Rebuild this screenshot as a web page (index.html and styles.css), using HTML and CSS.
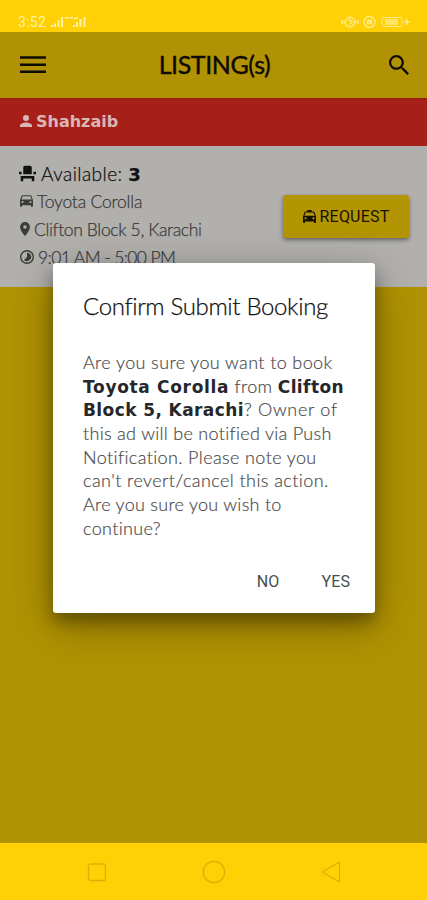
FILE: index.html
```html
<!DOCTYPE html>
<html lang="en">
<head>
<meta charset="utf-8">
<title>Listings</title>
<link rel="stylesheet" href="styles.css">
</head>
<body>
<div class="phone">
  <div class="status">
    <div class="status-left">
      <span class="clock">3:52</span>
      <svg width="38" height="12" viewBox="0 0 38 12" fill="currentColor"><path d="M1 9h2v2H1zM4 7.500h2V11H4zM7.500 4h2v7h-2zM11 1h2v10h-2zM15 1h4v1.500h-4zM20 1h3v1.500h-3zM23 9h2v2h-2zM26 6h2v5h-2zM29.500 3h2v8h-2zM33.500 1h2v10h-2zM24 2l4-1v1.500l-4 1z"/></svg>
    </div>
    <svg width="70" height="14" viewBox="0 0 70 14" fill="none" stroke="currentColor" stroke-width="1.500"><path d="M1 5v4M3 6v2M15 6v2M17 5v4"/><circle cx="9" cy="7" r="4.800"/><path d="M7 6l2-1.500L11 7 8.500 9.500"/><circle cx="28.500" cy="7" r="5.500"/><path d="M26.500 8.500h4v-2h-4zM27 6.500v-1.300h3v1.300"/><rect x="41" y="2.500" width="20" height="9" rx="2" stroke-width="1"/><rect x="44" y="4" width="13" height="6" fill="currentColor" stroke="none" opacity=".75"/><path d="M63 7h2M66 4v6M66 7h3"/></svg>
  </div>
  <header class="bar">
    <svg class="menu" width="26" height="18" viewBox="0 0 26 18" fill="currentColor"><path d="M0 .3h26v2.400H0zM0 7.500h26v2.400H0zM0 14.600h26V17H0z"/></svg>
    <h1>LISTING(s)</h1>
    <svg class="search" width="20" height="20" viewBox="3 3 17.500 17.500" fill="currentColor"><path d="M15.500 14h-.79l-.28-.27A6.470 6.470 0 0 0 16 9.500 6.500 6.500 0 1 0 9.500 16c1.610 0 3.090-.59 4.230-1.570l.27.28v.79l5 4.990L20.490 19zm-6 0C7.010 14 5 11.990 5 9.500S7.010 5 9.500 5 14 7.010 14 9.500 11.990 14 9.500 14z"/></svg>
  </header>
  <div class="owner">
    <svg width="12" height="12" viewBox="4 4 16 16" fill="currentColor"><path d="M12 12a4 4 0 1 0 0-8 4 4 0 0 0 0 8zm0 2c-2.670 0-8 1.340-8 4v2h16v-2c0-2.660-5.330-4-8-4z"/></svg>
    <span class="owner-name">Shahzaib</span>
  </div>
  <section class="card">
    <div class="details">
      <div class="row seats">
        <svg width="17" height="17" viewBox="2 2 20 20" fill="currentColor"><path d="M4 18v3h3v-3h10v3h3v-6H4zm15-8h3v3h-3zM2 10h3v3H2zm15 3H7V5c0-1.100.9-2 2-2h6c1.100 0 2 .9 2 2z"/></svg>
        <span class="t-available">Available: <b>3</b></span>
      </div>
      <div class="row car">
        <svg width="13" height="12" viewBox="3 5 18 16" fill="currentColor"><path d="M18.920 6.010C18.720 5.420 18.160 5 17.500 5h-11c-.66 0-1.210.42-1.420 1.010L3 12v8c0 .55.45 1 1 1h1c.55 0 1-.45 1-1v-1h12v1c0 .55.45 1 1 1h1c.55 0 1-.45 1-1v-8zM6.500 16a1.500 1.500 0 1 1 0-3 1.500 1.500 0 0 1 0 3zm11 0a1.500 1.500 0 1 1 0-3 1.500 1.500 0 0 1 0 3zM5 11l1.500-4.500h11L19 11z"/></svg>
        <span class="t-car">Toyota Corolla</span>
      </div>
      <div class="row place">
        <svg width="10" height="14" viewBox="5 2 14 20" fill="currentColor"><path d="M12 2a7 7 0 0 0-7 7c0 5.250 7 13 7 13s7-7.750 7-13a7 7 0 0 0-7-7zm0 9.500a2.500 2.500 0 1 1 0-5 2.500 2.500 0 0 1 0 5z"/></svg>
        <span class="t-place">Clifton Block 5, Karachi</span>
      </div>
      <div class="row time">
        <svg width="14" height="14" viewBox="2 2 20 20" fill="currentColor"><path d="M16.240 7.760A5.970 5.970 0 0 0 12 6v6l-4.240 4.240a6 6 0 0 0 8.480-8.480zM12 2a10 10 0 1 0 0 20 10 10 0 0 0 0-20zm0 18a8 8 0 1 1 0-16 8 8 0 0 1 0 16z"/></svg>
        <span class="t-time">9:01 AM - 5:00 PM</span>
      </div>
    </div>
    <button class="request">
      <svg width="13" height="13" viewBox="3 3 18 18" fill="currentColor"><path d="M18.920 6.010C18.720 5.420 18.160 5 17.500 5H15V3H9v2H6.500c-.66 0-1.210.42-1.420 1.010L3 12v8c0 .55.45 1 1 1h1c.55 0 1-.45 1-1v-1h12v1c0 .55.45 1 1 1h1c.55 0 1-.45 1-1v-8zM6.500 16a1.500 1.500 0 1 1 0-3 1.500 1.500 0 0 1 0 3zm11 0a1.500 1.500 0 1 1 0-3 1.500 1.500 0 0 1 0 3zM5 11l1.500-4.500h11L19 11z"/></svg>
      <span>REQUEST</span>
    </button>
  </section>
  <main class="rest"></main>
  <nav class="nav">
    <svg width="20" height="20" viewBox="0 0 20 20"><rect x="1.500" y="2" width="17" height="16.500" rx="2"/></svg>
    <svg width="24" height="24" viewBox="0 0 24 24"><circle cx="12" cy="12" r="10.700"/></svg>
    <svg width="20" height="22" viewBox="0 0 20 22"><path d="M18.500 1.800v18.400q0 .8-.8.300L1.800 11.500q-.8-.5 0-1L17.700 1.500q.8-.5.800.3z"/></svg>
  </nav>
  <div class="dialog" role="dialog">
    <h2>Confirm Submit Booking</h2>
    <p>
      <span class="line l1">Are you sure you want to book</span>
      <span class="line l2"><b>Toyota Corolla</b> from <b>Clifton</b></span>
      <span class="line l3"><b>Block 5, Karachi</b>? Owner of</span>
      <span class="line l4">this ad will be notified via Push</span>
      <span class="line l5">Notification. Please note you</span>
      <span class="line l6">can't revert/cancel this action.</span>
      <span class="line l7">Are you sure you wish to</span>
      <span class="line l8">continue?</span>
    </p>
    <div class="actions"><button>NO</button><button>YES</button></div>
  </div>
</div>
</body>
</html>
```
FILE: styles.css
```css
* { box-sizing: border-box; }
body { margin: 0; font-family: Lato, sans-serif; }
h1, h2, p { margin: 0; font-weight: 400; }
svg { display: block; flex: none; }
button { border: 0; margin: 0; padding: 0; background: none; font: 400 16px Roboto, sans-serif; }
.phone { position: relative; width: 427px; height: 900px; display: flex; flex-direction: column; background: #ffd005; overflow: hidden; }
.status { height: 32px; padding: 13px 16px 0 18px; display: flex; justify-content: space-between; color: #fff3a6; }
.status-left { display: flex; gap: 4px; height: 18px; align-items: center; }
.clock { font: 400 14px/18px Roboto, sans-serif; letter-spacing: .3px; }
.status > svg { margin-top: 2px; opacity: .8; }
.bar { height: 66px; padding: 0 18px 0 20px; display: flex; justify-content: space-between; align-items: center; background: #b19204; color: #0d0b02; }
.bar h1 { font-size: 25px; font-weight: 400; line-height: 30px; letter-spacing: -.4px; -webkit-text-stroke: .4px; white-space: nowrap; padding: 0 6px 2px 0; }
.owner { height: 48px; padding: 0 20px 3px; display: flex; align-items: center; gap: 4px; background: #a62019; color: #d9b6b6; border-top: 1px solid #94200d; }
.owner-name { font: 700 16px "DejaVu Sans", sans-serif; }
.card { height: 141px; background: #b1b0ad; display: flex; justify-content: space-between; padding: 13px 18px 0 20px; color: #3b3b3a; }
.details { width: 220px; }
.row { display: flex; align-items: center; height: 28px; font-size: 17.500px; font-weight: 300; white-space: nowrap; -webkit-text-stroke: .25px; }
.seats { gap: 5px; margin-left: -1px; font-size: 19px; color: #111; letter-spacing: .45px; }
.seats b { font: 700 18px/20px "DejaVu Sans", sans-serif; }
.car { gap: 4px; letter-spacing: -.2px; }
.place { gap: 4px; letter-spacing: -.35px; }
.time { gap: 4px; letter-spacing: -.6px; }
.request { width: 126px; height: 43px; margin-top: 36px; border-radius: 3px; background: #b39402; color: #171302; display: flex; justify-content: center; align-items: center; gap: 4px; box-shadow: 0 2px 4px rgba(0,0,0,.45); }
.request span { letter-spacing: .2px; }
.rest { flex: 1; background: #b19203; }
.nav { height: 57px; display: grid; grid-template-columns: 20px 24px 20px; column-gap: 95px; padding-left: 87px; align-items: center; fill: none; stroke: #dfae05; stroke-width: 1.300; }
.dialog { position: absolute; left: 53px; top: 263px; width: 322px; height: 350px; padding: 28px 25px 0 30px; background: #fff; border-radius: 3px; box-shadow: 0 9px 16px rgba(0,0,0,.3), 0 12px 42px rgba(0,0,0,.3); display: flex; flex-direction: column; }
.dialog h2 { font-size: 24px; line-height: 30px; font-weight: 300; color: #111; letter-spacing: -.35px; -webkit-text-stroke: .25px; white-space: nowrap; }
.dialog p { margin-top: 30px; font-size: 18px; font-weight: 300; color: #4c4c4c; letter-spacing: .38px; -webkit-text-stroke: .2px; }
.dialog b { font: 700 17px/20px "DejaVu Sans", sans-serif; letter-spacing: .4px; color: #27272b; -webkit-text-stroke: 0; }
.line { display: block; height: 23.700px; line-height: 23.700px; white-space: nowrap; }
.l2 b:first-child { letter-spacing: .68px; }
.l3 { letter-spacing: .7px; }
.l4 { letter-spacing: .3px; }
.l6 { letter-spacing: .42px; }
.l7 { letter-spacing: .28px; }
.l8 { letter-spacing: .35px; }
.actions { display: flex; justify-content: flex-end; gap: 42px; margin-top: 30px; }
.actions button { color: #434e50; line-height: 22px; letter-spacing: .1px; }
```
